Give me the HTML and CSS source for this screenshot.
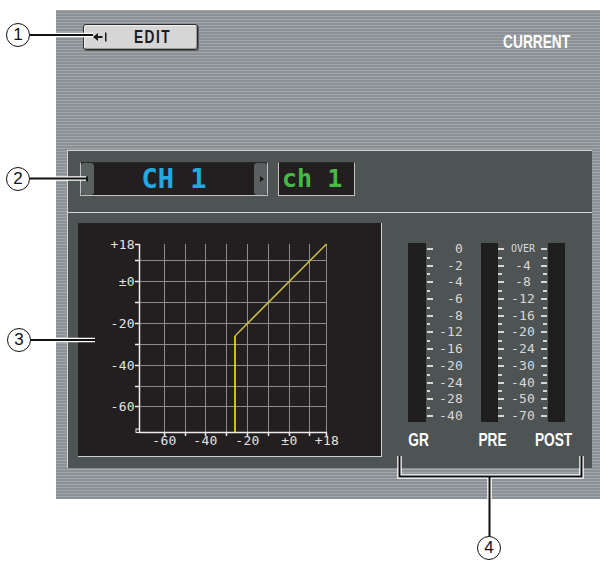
FILE: index.html
```html
<!DOCTYPE html>
<html>
<head>
<meta charset="utf-8">
<link rel="stylesheet" href="styles.css">
</head>
<body>
<div class="page">
  <div class="screen">
    <div class="topbar">
      <div class="edit-btn">
        <svg class="back-icon" viewBox="0 0 14 12" width="14" height="12">
          <path d="M0 6 L5 2 L5 10 Z" fill="#1a1a1a"/>
          <rect x="4" y="5" width="5.5" height="2" fill="#1a1a1a"/>
          <rect x="12" y="1.5" width="1.5" height="9" fill="#1a1a1a"/>
        </svg>
        <span class="edit-label"><span class="narrow">EDIT</span></span>
      </div>
      <div class="current"><span class="narrow">CURRENT</span></div>
    </div>
    <div class="panel">
      <div class="ch-row">
        <div class="ch-box">
          <span class="ch-arrow ch-arrow-left"><i></i></span>
          <span class="ch-id">CH 1</span>
          <span class="ch-arrow ch-arrow-right"><i></i></span>
        </div>
        <div class="name-box">ch 1</div>
      </div>
      <div class="main-row">
        <div class="graph">
          <svg width="303" height="233" viewBox="0 0 303 233">
            <g stroke="#8c8c8c" stroke-width="1">
              <path d="M86.5 21V209M107.5 21V209M127.5 21V209M148.5 21V209M169.5 21V209M190.5 21V209M211.5 21V209M231.5 21V209M248.5 21V209"/>
              <path d="M61 37.5H248.5M61 58.5H248.5M61 79.5H248.5M61 100.5H248.5M61 121.5H248.5M61 142.5H248.5M61 163.5H248.5M61 183.5H248.5"/>
            </g>
            <g stroke="#ececec" stroke-width="1.5" fill="none">
              <path d="M61.5 21V209.5H249"/>
              <path d="M57 21.5H61M57 37.5H61M57 58.5H61M57 79.5H61M57 100.5H61M57 121.5H61M57 142.5H61M57 163.5H61M57 183.5H61"/>
              <path d="M86.5 209.5V213M107.5 209.5V213M127.5 209.5V213M148.5 209.5V213M169.5 209.5V213M190.5 209.5V213M211.5 209.5V213M231.5 209.5V213M248.5 209.5V213"/>
              <rect x="58" y="206" width="3.5" height="3.5" stroke-width="1"/>
            </g>
            <path d="M157 113L248.5 21" stroke="#c9c23c" stroke-width="1.5" fill="none"/>
            <path d="M157 209.5V113" stroke="#f4e800" stroke-width="1.6" fill="none"/>
            <g class="axis-text" text-anchor="end">
              <text x="57" y="26">+18</text>
              <text x="57" y="63">±0</text>
              <text x="57" y="105">-20</text>
              <text x="57" y="147">-40</text>
              <text x="57" y="188">-60</text>
            </g>
            <g class="axis-text" text-anchor="middle">
              <text x="86.5" y="222">-60</text>
              <text x="127.5" y="222">-40</text>
              <text x="169.5" y="222">-20</text>
              <text x="211.5" y="222">±0</text>
              <text x="249" y="222">+18</text>
            </g>
          </svg>
        </div>
        <div class="meters">
          <div class="meter-row">
            <div class="bar bar-gr"></div>
            <div class="scale gr-scale">
              <span>0</span><span>-2</span><span>-4</span><span>-6</span><span>-8</span><span>-12</span><span>-16</span><span>-20</span><span>-24</span><span>-28</span><span>-40</span>
            </div>
            <div class="bar bar-pre"></div>
            <div class="scale mid-scale">
              <span class="over">OVER</span><span>-4</span><span>-8</span><span>-12</span><span>-16</span><span>-20</span><span>-24</span><span>-30</span><span>-40</span><span>-50</span><span>-70</span>
            </div>
            <div class="bar bar-post"></div>
          </div>
          <div class="meter-labels">
            <span class="lbl lbl-gr"><span class="narrow">GR</span></span>
            <span class="lbl lbl-pre"><span class="narrow">PRE</span></span>
            <span class="lbl lbl-post"><span class="narrow">POST</span></span>
          </div>
        </div>
      </div>
    </div>
  </div>

  <svg class="leaders" width="604" height="564" viewBox="0 0 604 564">
    <g fill="none" stroke="#ffffff" stroke-width="4.5">
      <path d="M30 35H93"/>
      <path d="M30 178.5H86"/>
      <path d="M31 340H95"/>
      <path d="M399.5 456V476.5H581.5V456M489.5 476.5V537"/>
    </g>
    <g fill="none" stroke="#111111" stroke-width="2">
      <path d="M30 35H93"/>
      <path d="M30 178.5H86"/>
      <path d="M31 340H95"/>
      <path d="M399.5 456V476.5H581.5V456M489.5 476.5V537"/>
    </g>
  </svg>
  <div class="callout c1">1</div>
  <div class="callout c2">2</div>
  <div class="callout c3">3</div>
  <div class="callout c4">4</div>
</div>
</body>
</html>
```
FILE: styles.css
```css
* { box-sizing: border-box; }
html, body { margin: 0; padding: 0; background: #ffffff; }
body { font-family: "Liberation Sans", Arial, sans-serif; }

.page {
  position: relative;
  width: 604px;
  height: 564px;
  overflow: hidden;
  padding-top: 10px;
  padding-left: 56px;
}

.screen {
  width: 544px;
  height: 489px;
  background: repeating-linear-gradient(to bottom, #a3a7ab 0, #a3a7ab 1px, #8b9094 1px, #8b9094 3px);
}

.narrow {
  display: inline-block;
  transform: scaleX(0.76);
  transform-origin: center;
  white-space: nowrap;
}

.topbar {
  height: 140px;
  display: flex;
  justify-content: space-between;
  align-items: flex-start;
  padding: 14px 30px 0 27px;
}

.edit-btn {
  width: 115px;
  height: 26px;
  display: flex;
  align-items: center;
  background: #d6d6d6;
  border: 1px solid #2b2b2b;
  border-radius: 3px;
  box-shadow: inset 1px 1px 0 #f4f4f4, inset -1px -1px 0 #9c9c9c, 1px 1px 0 #5a5e62;
}

.back-icon { flex: none; margin-left: 9px; }

.edit-label {
  flex: 1;
  text-align: center;
  padding-left: 2px;
  font: bold 18px/20px "Liberation Sans", Arial, sans-serif;
  letter-spacing: 2px;
  color: #1c1c1c;
}

.current {
  margin-top: 8px;
  font: bold 18px/20px "Liberation Sans", Arial, sans-serif;
  color: #ffffff;
}

.current .narrow { transform-origin: right center; }

.panel {
  margin-left: 11px;
  width: 525px;
  height: 318px;
  background: #4e5354;
  border-top: 1px solid #d4d4d4;
  border-left: 1px solid #d4d4d4;
}

.ch-row {
  height: 62px;
  display: flex;
  align-items: flex-start;
  gap: 10px;
  padding: 11px 0 0 12px;
  border-bottom: 1px solid #d4d4d4;
}

.ch-box, .name-box {
  height: 34px;
  background: #231f20;
  border: 1px solid #c2c2c2;
  border-top-color: #2a2a2a;
}

.ch-box {
  width: 188px;
  display: flex;
  align-items: stretch;
}

.ch-arrow {
  flex: none;
  width: 13px;
  background: #5a5f60;
  border-radius: 3px;
  display: flex;
  align-items: center;
  justify-content: center;
}

.ch-arrow i { width: 0; height: 0; border-top: 3px solid transparent; border-bottom: 3px solid transparent; }
.ch-arrow-left i { border-right: 4px solid #151515; margin-right: 3px; }
.ch-arrow-right i { border-left: 4px solid #151515; margin-left: 3px; }

.ch-id {
  flex: 1;
  display: flex;
  align-items: center;
  justify-content: center;
  font: bold 27px/32px "DejaVu Sans Mono", monospace;
  color: #23a9e1;
  white-space: pre;
}

.name-box {
  width: 77px;
  display: flex;
  align-items: center;
  padding-left: 3px;
  font: bold 25px/32px "DejaVu Sans Mono", monospace;
  color: #47b947;
  white-space: pre;
}

.main-row {
  height: 255px;
  display: flex;
  align-items: flex-start;
  padding: 10px 0 0 10px;
}

.graph {
  width: 304px;
  height: 234px;
  background: #231f20;
  border-right: 1px solid #d0d0d0;
  border-bottom: 1px solid #d0d0d0;
}

.graph svg { display: block; }

.axis-text {
  font-family: "DejaVu Sans Mono", monospace;
  font-size: 13px;
  fill: #e4e4e4;
  letter-spacing: 0.3px;
}

.meters {
  margin-left: 26px;
  margin-top: 20px;
}

.meter-row {
  display: flex;
  height: 179px;
}

.bar { height: 179px; background: #1e1e1e; }
.bar-gr { width: 18px; }
.bar-pre, .bar-post { width: 17px; }

.scale {
  position: relative;
  height: 179px;
  display: flex;
  flex-direction: column;
  justify-content: space-between;
  font: 13px/12px "DejaVu Sans Mono", monospace;
  letter-spacing: 0.2px;
  color: #d8d8d8;
}

.scale span {
  position: relative;
  display: block;
  height: 12px;
  white-space: nowrap;
}

.gr-scale { width: 55px; text-align: right; padding-right: 18px; }

.gr-scale span::before {
  content: "";
  position: absolute;
  left: 1px;
  top: 5px;
  width: 6px;
  height: 2px;
  background: #d8d8d8;
}

.gr-scale span + span::after {
  content: "";
  position: absolute;
  left: 1px;
  top: -3px;
  width: 3px;
  height: 2px;
  background: #d8d8d8;
}

.mid-scale { width: 50px; text-align: center; }

.mid-scale span::before {
  content: "";
  position: absolute;
  left: 0;
  top: 5px;
  width: 6px;
  height: 2px;
  background: #d8d8d8;
  box-shadow: 43px 0 0 #d8d8d8;
}

.mid-scale span + span::after {
  content: "";
  position: absolute;
  left: 0;
  top: -3px;
  width: 4px;
  height: 2px;
  background: #d8d8d8;
  box-shadow: 45px 0 0 #d8d8d8;
}

.mid-scale .over { font-size: 10px; letter-spacing: 0; }

.meter-labels {
  display: flex;
  margin-top: 8px;
  margin-left: -8px;
}

.lbl {
  display: block;
  text-align: center;
  font: bold 18px/20px "Liberation Sans", Arial, sans-serif;
  color: #ffffff;
}
.lbl-gr { width: 37px; }
.lbl-pre { width: 42px; margin-left: 35px; }
.lbl-post { width: 43px; margin-left: 15px; }

.leaders {
  position: absolute;
  left: 0;
  top: 0;
  pointer-events: none;
}

.callout {
  position: absolute;
  width: 24px;
  height: 24px;
  border: 1px solid #111111;
  border-radius: 50%;
  background: #ffffff;
  text-align: center;
  font: 17px/22px "Liberation Sans", Arial, sans-serif;
  color: #111111;
}
.c1 { left: 6px; top: 23px; }
.c2 { left: 6px; top: 167px; }
.c3 { left: 7px; top: 328px; }
.c4 { left: 477px; top: 536px; }
```
